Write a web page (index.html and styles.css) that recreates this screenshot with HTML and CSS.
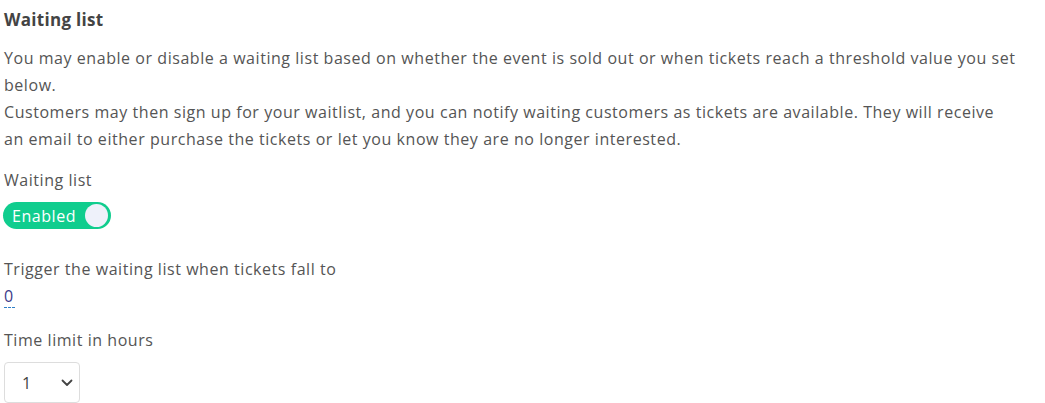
FILE: index.html
```html
<!DOCTYPE html>
<html>
<head>
<meta charset="utf-8">
<link rel="stylesheet" href="styles.css">
</head>
<body>
<section class="panel">
  <h2 class="title">Waiting list</h2>
  <p class="desc">You may enable or disable a waiting list based on whether the event is sold out or when tickets reach a threshold value you set below.<br>Customers may then sign up for your waitlist, and you can notify waiting customers as tickets are available. They will receive an email to either purchase the tickets or let you know they are no longer interested.</p>
  <div class="field">
    <div class="label">Waiting list</div>
    <div class="toggle"><span class="toggle-text">Enabled</span><span class="knob"></span></div>
  </div>
  <div class="field">
    <div class="label">Trigger the waiting list when tickets fall to</div>
    <span class="editable">0</span>
  </div>
  <div class="field">
    <div class="label">Time limit in hours</div>
    <div class="select"><span class="select-val">1</span>
      <svg class="chev" width="12" height="8" viewBox="0 0 12 8"><path d="M1.5 1.5 L6 6 L10.5 1.5" fill="none" stroke="#444" stroke-width="1.8" stroke-linecap="round" stroke-linejoin="round"/></svg>
    </div>
  </div>
</section>
</body>
</html>
```
FILE: styles.css
```css
html, body { margin: 0; padding: 0; background: #fff; }
body { font-family: "Open Sans", "Lato", sans-serif; color: #555; font-size: 16px; letter-spacing: 0.55px; }
.panel { padding: 0 0 0 4px; }
.title { margin: 0; padding-top: 8px; font-size: 17px; font-weight: 700; color: #444; line-height: 24px; letter-spacing: 0.3px; }
.desc { margin: 13px 0 0; line-height: 27px; width: 1012px; }
.field { margin-top: 15px; }
.label { line-height: 24px; }
.toggle { display: inline-flex; align-items: center; margin-top: 10px; margin-left: -1px; height: 27px; background: #10cd8e; border-radius: 14px; padding: 0 3px 0 9px; gap: 9px; }
.toggle-text { color: #fff; }
.knob { width: 23px; height: 23px; border-radius: 50%; background: #eef1fa; }
.field + .field { margin-top: 28px; }
.editable { display: inline-block; margin-top: 4px; padding-right: 1px; color: #3b3b8a; border-bottom: 1px dashed #2f80c8; line-height: 22px; }
.field:last-child { margin-top: 20px; }
.select { display: flex; align-items: center; justify-content: space-between; margin-top: 10px; width: 76px; height: 41px; box-sizing: border-box; border: 1px solid #ddd; border-radius: 4px; padding: 0 6px 0 17px; }
.select-val { color: #444; }
```
